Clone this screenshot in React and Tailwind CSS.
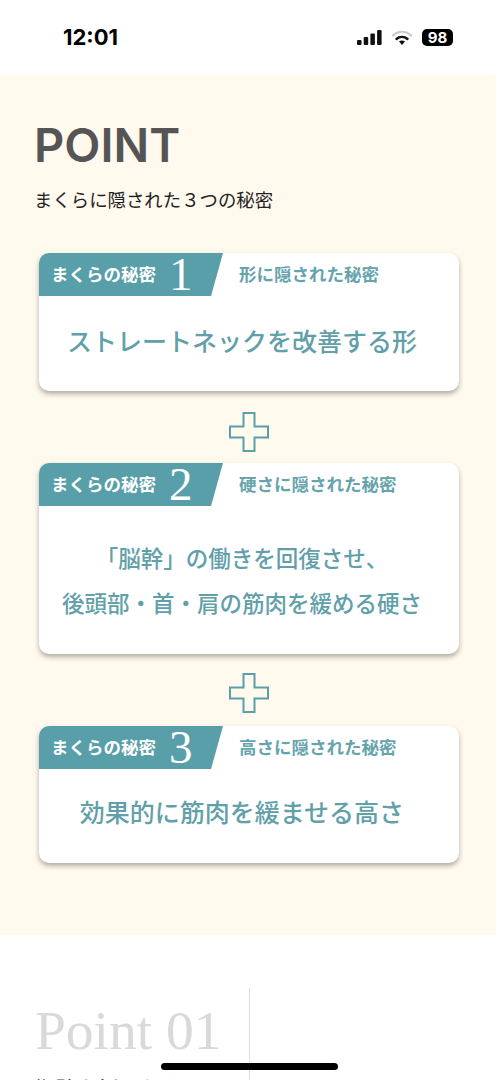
import React from "react";

const JP = "font-['Noto_Sans_CJK_JP','Noto_Sans',sans-serif]";

function Plus({ offset }) {
  return (
    <div className={`flex h-[72px] items-center justify-center ${offset}`}>
      <svg width="40" height="40" viewBox="0 0 40 40" fill="none">
        <path
          d="M14.5 1H25.5V14.5H39V25.5H25.5V39H14.5V25.5H1V14.5H14.5Z"
          stroke="#5b9fa9"
          strokeWidth="2"
        />
      </svg>
    </div>
  );
}

function Card({ n, label, body, size, lines }) {
  return (
    <div className="w-[420px] rounded-[10px] bg-white shadow-[0_3px_5px_rgba(90,80,70,0.45)]">
      <div className="flex h-[43px] items-center">
        <div className="relative flex h-[43px] w-[184px] items-center pl-[12px]">
          <div className="absolute inset-0 rounded-tl-[10px] bg-[#589fa9] [clip-path:polygon(0_0,100%_0,93.5%_100%,0_100%)]"></div>
          <span className="relative text-[17.5px] font-bold whitespace-nowrap text-white">まくらの秘密</span>
          <span className="relative ml-[13px] font-['Liberation_Serif',serif] text-[47px] leading-[43px] text-white">{n}</span>
        </div>
        <span className="ml-[16px] text-[17.5px] font-bold text-[#66a4ad]">{label}</span>
      </div>
      <div className={`flex flex-col items-center justify-center pr-[14px] ${body}`}>
        {lines.map((l) => (
          <p key={l} className={`${size} leading-[45px] font-medium whitespace-nowrap text-[#62a0a9]`}>
            {l}
          </p>
        ))}
      </div>
    </div>
  );
}

export default function App() {
  return (
    <div className={`relative h-[1080px] w-[499px] overflow-hidden bg-white ${JP}`}>
      <div className="flex h-[75px] items-start justify-between pt-[24px] pr-[46px] pl-[63px]">
        <span className="font-['Inter',sans-serif] text-[22px] leading-[26px] font-bold text-black">12:01</span>
        <div className="flex items-center gap-[10px] pt-[5px]">
          <svg width="25" height="15" viewBox="0 0 25 15" fill="#111">
            <rect x="0" y="10" width="4.5" height="5" rx="1" />
            <rect x="6.7" y="7" width="4.5" height="8" rx="1" />
            <rect x="13.4" y="3.5" width="4.5" height="11.5" rx="1" />
            <rect x="20.1" y="0" width="4.5" height="15" rx="1" />
          </svg>
          <svg width="20" height="16" viewBox="0 0 20 16" fill="none" strokeLinecap="round">
            <path d="M1 5.5C6 0.5 14 0.5 19 5.5" stroke="#c8c8c8" strokeWidth="2.2" />
            <path d="M4.5 9C7.5 6.2 12.5 6.2 15.5 9" stroke="#111" strokeWidth="2.4" />
            <path d="M10 15L7 11.5C8.7 10.2 11.3 10.2 13 11.5Z" fill="#111" />
          </svg>
          <div className="flex h-[17px] w-[31px] items-center justify-center rounded-[5px] bg-black font-['Inter',sans-serif] text-[15px] leading-none font-bold text-white">
            98
          </div>
        </div>
      </div>

      <div className="h-[860px] w-[496px] bg-[#fff9ee] pt-[44px] pl-[35px]">
        <h1 className="-ml-[1px] font-['Inter',sans-serif] text-[47px] leading-[52px] font-semibold text-[#555555]">POINT</h1>
        <p className="-ml-[1px] mt-[14px] text-[18.4px] leading-[28px] whitespace-nowrap text-[#222222]">まくらに隠された３つの秘密</p>
        <div className="mt-[40px] ml-[4px] flex w-[420px] flex-col">
          <Card n="1" label="形に隠された秘密" body="h-[95px] pb-[7px]" size="text-[25px]" lines={["ストレートネックを改善する形"]} />
          <Plus offset="pt-[9px]" />
          <Card n="2" label="硬さに隠された秘密" body="h-[148px]" size="text-[22.5px]" lines={["「脳幹」の働きを回復させ、", "後頭部・首・肩の筋肉を緩める硬さ"]} />
          <Plus offset="pt-[5px]" />
          <Card n="3" label="高さに隠された秘密" body="h-[94px] pb-[9px]" size="text-[25px]" lines={["効果的に筋肉を緩ませる高さ"]} />
        </div>
      </div>

      <div className="flex items-start">
        <div className="w-[249px] pt-[66px] pl-[35px]">
          <p className="font-['Liberation_Serif',serif] text-[55.5px] leading-[60px] whitespace-nowrap text-[#d9d9d9]">Point 01</p>
          <p className="mt-[15px] text-[15px] leading-[20px] font-bold whitespace-nowrap text-[#4a4a4a]">後頭部を支えるまくら</p>
        </div>
        <div className="mt-[53px] h-[200px] w-px bg-[#dddddd]"></div>
      </div>

      <div className="absolute top-[1063px] left-[161px] h-[7px] w-[177px] rounded-full bg-black"></div>
    </div>
  );
}
